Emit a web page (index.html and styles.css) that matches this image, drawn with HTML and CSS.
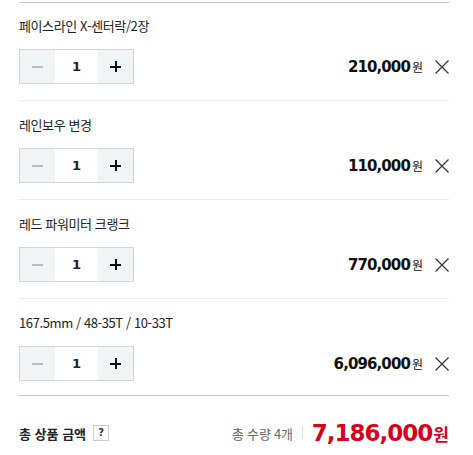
FILE: index.html
```html
<!DOCTYPE html>
<html lang="ko">
<head>
<meta charset="utf-8">
<link rel="stylesheet" href="styles.css">
</head>
<body>
<div class="cart">
  <div class="item">
    <div class="name">페이스라인 X-센터락/2장</div>
    <div class="line">
      <div class="qty"><span class="btn minus"></span><span class="num">1</span><span class="btn plus"></span></div>
      <div class="price"><b>210,000</b><span class="won">원</span></div>
      <svg class="del" viewBox="0 0 14 14" width="14" height="14"><path d="M0.5 0.5L13.5 13.5M13.5 0.5L0.5 13.5" stroke="#333" stroke-width="1.2" fill="none"/></svg>
    </div>
  </div>
  <div class="item">
    <div class="name">레인보우 변경</div>
    <div class="line">
      <div class="qty"><span class="btn minus"></span><span class="num">1</span><span class="btn plus"></span></div>
      <div class="price"><b>110,000</b><span class="won">원</span></div>
      <svg class="del" viewBox="0 0 14 14" width="14" height="14"><path d="M0.5 0.5L13.5 13.5M13.5 0.5L0.5 13.5" stroke="#333" stroke-width="1.2" fill="none"/></svg>
    </div>
  </div>
  <div class="item">
    <div class="name">레드 파워미터 크랭크</div>
    <div class="line">
      <div class="qty"><span class="btn minus"></span><span class="num">1</span><span class="btn plus"></span></div>
      <div class="price"><b>770,000</b><span class="won">원</span></div>
      <svg class="del" viewBox="0 0 14 14" width="14" height="14"><path d="M0.5 0.5L13.5 13.5M13.5 0.5L0.5 13.5" stroke="#333" stroke-width="1.2" fill="none"/></svg>
    </div>
  </div>
  <div class="item last">
    <div class="name">167.5mm / 48-35T / 10-33T</div>
    <div class="line">
      <div class="qty"><span class="btn minus"></span><span class="num">1</span><span class="btn plus"></span></div>
      <div class="price"><b>6,096,000</b><span class="won">원</span></div>
      <svg class="del" viewBox="0 0 14 14" width="14" height="14"><path d="M0.5 0.5L13.5 13.5M13.5 0.5L0.5 13.5" stroke="#333" stroke-width="1.2" fill="none"/></svg>
    </div>
  </div>
  <div class="total">
    <div class="label">총 상품 금액 <span class="help">?</span></div>
    <div class="sum">
      <span class="count">총 수량 4개</span>
      <span class="bar"></span>
      <span class="amount"><b>7,186,000</b><span class="twon">원</span></span>
    </div>
  </div>
</div>
</body>
</html>
```
FILE: styles.css
```css
html, body {
  margin: 0;
  padding: 0;
  background: #fff;
}
body {
  font-family: "Noto Sans CJK KR", "Noto Sans", sans-serif;
  color: #333;
}
.cart {
  margin: 2px 0 0 19px;
  width: 430px;
  border-top: 1px solid #c4c4c4;
}
.item {
  padding: 14px 0 16px;
  border-bottom: 1px solid #ececec;
}
.item + .item {
  padding-top: 15px;
}
.item.last {
  padding-bottom: 14px;
  border-bottom: 1px solid #c4c4c4;
}
.name {
  font-size: 13px;
  line-height: 18px;
  letter-spacing: -0.4px;
  color: #222;
  margin-bottom: 14px;
}
.line {
  display: flex;
  align-items: center;
}
.qty {
  display: flex;
  width: 113px;
  height: 33px;
  border: 1px solid #d6d6d6;
  background: #fff;
}
.btn {
  width: 35px;
  height: 33px;
  background: #f2f3f5;
  position: relative;
}
.btn::before, .btn::after {
  content: "";
  position: absolute;
  left: 50%;
  top: 50%;
}
.minus::before {
  width: 11px;
  height: 2px;
  margin: -1px 0 0 -6px;
  background: #bbb;
}
.plus::before {
  width: 11px;
  height: 2px;
  margin: -1px 0 0 -6px;
  background: #111;
}
.plus::after {
  width: 2px;
  height: 11px;
  margin: -6px 0 0 -1px;
  background: #111;
}
.num {
  flex: 1;
  text-align: center;
  line-height: 33px;
  font-family: "DejaVu Sans", sans-serif;
  font-weight: bold;
  font-size: 13px;
  color: #222;
}
.price {
  margin-left: auto;
  display: flex;
  align-items: baseline;
  color: #111;
}
.price b {
  font-family: "DejaVu Sans", sans-serif;
  font-size: 15px;
  letter-spacing: -0.9px;
}
.won {
  font-size: 12px;
  margin-left: 2px;
}
.del {
  margin-left: 12px;
  display: block;
}
.total {
  display: flex;
  align-items: center;
  justify-content: space-between;
  padding-top: 24px;
}
.label {
  font-size: 13px;
  font-weight: bold;
  color: #222;
  display: flex;
  align-items: center;
}
.help {
  display: inline-block;
  width: 14px;
  height: 14px;
  border: 1px solid #ccc;
  margin-left: 7px;
  font-family: "DejaVu Sans", sans-serif;
  font-size: 10px;
  line-height: 14px;
  text-align: center;
  font-weight: bold;
  color: #333;
}
.sum {
  display: flex;
  align-items: center;
}
.count {
  font-size: 13px;
  letter-spacing: -0.2px;
  color: #666;
}
.bar {
  width: 1px;
  height: 12px;
  background: #ddd;
  margin: 0 9px;
}
.amount {
  color: #d5001c;
  display: flex;
  align-items: baseline;
}
.amount b {
  font-family: "DejaVu Sans", sans-serif;
  font-size: 23px;
  letter-spacing: -1px;
}
.twon {
  font-size: 17px;
  font-weight: bold;
  margin-left: 1px;
}
```
